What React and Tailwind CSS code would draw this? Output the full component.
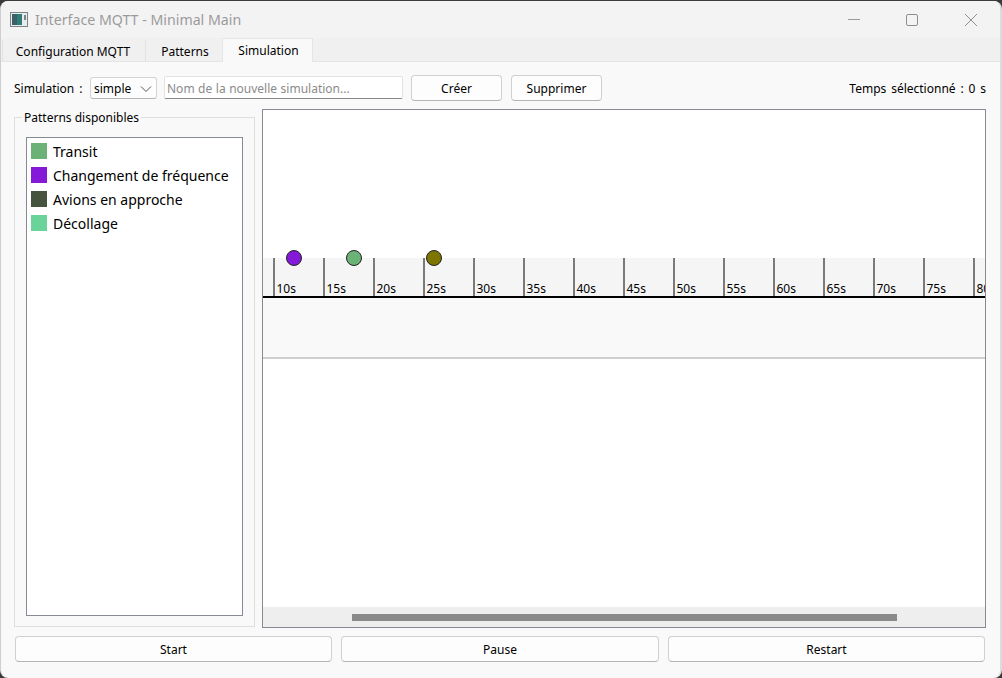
import React from 'react';

const patterns = [
  { name: 'Transit', color: 'bg-[#6bb276]' },
  { name: 'Changement de fréquence', color: 'bg-[#8419d8]' },
  { name: 'Avions en approche', color: 'bg-[#45533f]' },
  { name: 'Décollage', color: 'bg-[#6ad39a]' },
];

const ticks = [10, 15, 20, 25, 30, 35, 40, 45, 50, 55, 60, 65, 70, 75, 80];

const btn = 'flex items-center justify-center h-[26px] pt-[2px] bg-[#fdfdfd] border border-[#d0d0d0] border-b-[#b5b5b5] rounded-[4px] text-[12px] text-black';

const App = () => {
  return (
    <div className="w-[1002px] h-[678px] bg-[#3a3a3a] overflow-hidden font-['Noto_Sans',sans-serif]">
      <div className="w-[1002px] h-[677px] mt-px rounded-lg overflow-hidden bg-[#f9f9f9] border-l border-r-2 border-l-[#cfcfcf] border-r-[#dcdcdc] flex flex-col">
        {/* Title bar */}
        <div className="h-[37px] shrink-0 bg-[#f3f3f3] flex items-center pl-[9px]">
          <svg width="18" height="15" viewBox="0 0 18 15">
            <rect x="0.5" y="0.5" width="17" height="14" fill="#e8ecec" stroke="#7c8488" />
            <rect x="2" y="2" width="10" height="11" fill="#2f7d78" />
            <rect x="2" y="2" width="5" height="11" fill="#3f5f68" />
            <rect x="14" y="3" width="2" height="5" fill="#7c8488" />
          </svg>
          <span className="ml-[7px] text-[14.2px] text-[#9b9b9b]">Interface MQTT - Minimal Main</span>
          <div className="ml-auto flex items-center">
            <svg width="46" height="14" viewBox="0 0 46 14" className="mr-[11px]">
              <path d="M16 6.5h12" stroke="#9a9a9a" />
            </svg>
            <svg width="46" height="14" viewBox="0 0 46 14" className="mr-[13px]">
              <rect x="17.5" y="1.5" width="11" height="11" rx="1.5" fill="none" stroke="#8f8f8f" />
            </svg>
            <svg width="46" height="14" viewBox="0 0 46 14" className="mr-[6px]">
              <path d="M17 1l12 12M29 1L17 13" stroke="#8f8f8f" />
            </svg>
          </div>
        </div>

        {/* Tabs */}
        <div className="h-[24px] shrink-0 bg-[#f0f0f0] flex items-end pl-[1px] border-b border-[#e5e5e5] text-[12px] text-black">
          <div className="w-[144px] h-[21px] flex items-center justify-center border-x border-[#e2e2e2] pt-[2px] pr-[2px]">Configuration MQTT</div>
          <div className="w-[76px] h-[21px] flex items-center justify-center pt-[2px] pl-[2px]">Patterns</div>
          <div className="w-[91px] h-[24px] -mb-px flex items-center justify-center bg-[#f9f9f9] border border-b-0 border-[#e5e5e5] pl-[2px]">Simulation</div>
        </div>

        {/* Toolbar */}
        <div className="h-[47px] shrink-0 flex items-center pt-[4px] pl-[13px] pr-[14px] text-[12px] text-black">
          <span className="w-[76px] pt-[2px] [word-spacing:2px]">Simulation :</span>
          <div className="w-[67px] h-[22px] flex items-center pl-[3px] pt-[2px] bg-[#fdfdfd] border border-[#d4d4d4] border-b-[#b5b5b5] rounded-[3px]">
            simple
            <svg width="12" height="8" viewBox="0 0 12 8" className="ml-auto mr-[4px]">
              <path d="M1 1.5l5 5 5-5" fill="none" stroke="#555" />
            </svg>
          </div>
          <div className="w-[239px] h-[23px] ml-[7px] flex items-center pl-[2px] pt-[2px] bg-white border border-[#e2e2e2] border-b-[#888] rounded-[2px] text-[#8a8a8a] [word-spacing:0.4px]">
            Nom de la nouvelle simulation...
          </div>
          <div className={`${btn} w-[91px] ml-[8px]`}>Créer</div>
          <div className={`${btn} w-[91px] ml-[9px]`}>Supprimer</div>
          <span className="ml-auto pt-[2px] [word-spacing:1.75px]">Temps sélectionné : 0 s</span>
        </div>

        {/* Main area */}
        <div className="h-[519px] shrink-0 flex pl-[13px]">
          {/* Patterns group */}
          <div className="relative w-[241px] h-[510px] mt-[8px] border border-[#dedede] pt-[19px] pl-[11px]">
            <span className="absolute left-[7px] -top-[8px] px-[2px] bg-[#f9f9f9] text-[12px] leading-[16px] text-black">Patterns disponibles</span>
            <ul className="w-[217px] h-[479px] bg-white border border-[#868a94] pt-[1px] pl-[4px]">
              {patterns.map((p) => (
                <li key={p.name} className="h-[24px] flex items-center gap-[6px] text-[14px] text-black">
                  <span className={`w-[16px] h-[16px] ${p.color}`}></span>
                  {p.name}
                </li>
              ))}
            </ul>
          </div>

          {/* Timeline view */}
          <div className="relative w-[724px] h-[519px] ml-[7px] bg-white border border-[#868a94] overflow-hidden flex flex-col">
            <div className="h-[148px] shrink-0"></div>
            <div className="h-[38px] shrink-0 bg-[#f5f5f5] flex pl-[10px] overflow-hidden">
              {ticks.map((t) => (
                <div key={t} className="w-[50px] shrink-0 border-l-2 border-[#7a7a7a] flex items-end pl-[1.5px] text-[12px] leading-[14px] text-black">
                  {t}s
                </div>
              ))}
            </div>
            <div className="h-[2px] shrink-0 bg-black"></div>
            <div className="h-[61px] shrink-0 bg-[#f9f9f9] border-b-2 border-[#cfcfcf]"></div>
            <div className="flex-1"></div>
            {/* Scrollbar */}
            <div className="h-[20px] shrink-0 bg-[#eeeeee] flex items-center pl-[89px]">
              <div className="w-[545px] h-[7px] bg-[#8a8a8a]"></div>
            </div>
            {/* Markers */}
            <span className="absolute left-[23px] top-[140px] w-[16px] h-[16px] rounded-full bg-[#8419d8] border border-[#222]"></span>
            <span className="absolute left-[83px] top-[140px] w-[16px] h-[16px] rounded-full bg-[#6bb276] border border-[#222]"></span>
            <span className="absolute left-[163px] top-[140px] w-[16px] h-[16px] rounded-full bg-[#7c7600] border border-[#222]"></span>
          </div>
        </div>

        {/* Bottom buttons */}
        <div className="flex gap-[9px] pl-[14px] mt-[8px]">
          <div className={`${btn} w-[317px]`}>Start</div>
          <div className={`${btn} w-[318px]`}>Pause</div>
          <div className={`${btn} w-[317px]`}>Restart</div>
        </div>
      </div>
    </div>
  );
};

export default App;
